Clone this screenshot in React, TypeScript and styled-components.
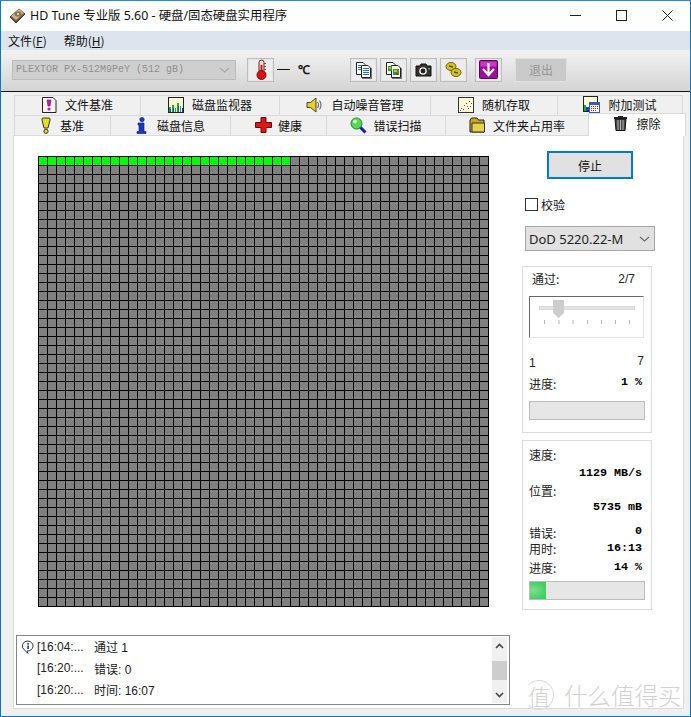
import React from "react";
import styled, { createGlobalStyle } from "styled-components";

const Global = createGlobalStyle`
  html, body { margin: 0; padding: 0; background: #f0f0f0; }
  * { box-sizing: border-box; }
  body { font-family: "Liberation Sans", "Noto Sans CJK SC", sans-serif; font-size: 12px; color: #111; }
`;

const Win = styled.div`
  width: 691px; height: 717px; border: 1px solid #0078d7; border-top-color: #2b88d8;
  background: #f0f0f0; display: flex; flex-direction: column; overflow: hidden; position: relative;
`;
const TitleBar = styled.div`
  height: 30px; background: #fff; display: flex; align-items: center; padding-left: 8px; flex: none;
`;
const TitleText = styled.div`
  margin: -2px 0 0 4px; font: 12.4px "Noto Sans", "Noto Sans CJK SC", sans-serif; color: #111; white-space: nowrap;
`;
const WinControls = styled.div`
  margin-left: auto; display: flex; height: 100%; align-items: center; padding-bottom: 2px;
`;
const WinBtn = styled.div`
  width: 46px; height: 100%; display: flex; align-items: center; justify-content: center; color: #222;
`;
const MenuBar = styled.div`
  height: 19px; background: #dde4ed; display: flex; gap: 17px; padding-left: 7px; align-items: center; flex: none;
`;
const MenuItem = styled.span`
  font: 12px "Noto Sans CJK SC", sans-serif; color: #111; u { text-underline-offset: 1px; }
`;
const Toolbar = styled.div`
  height: 41px; flex: none; background: linear-gradient(#f2f2f2, #d4d4d4);
  display: flex; align-items: center; padding-left: 11px;
`;
const BlackLine = styled.div` height: 1px; background: #111; flex: none; `;
const DriveCombo = styled.div`
  width: 224px; height: 20px; margin-top: -2px; background: #cfcfcf; border: 1px solid #bcbcbc;
  display: flex; align-items: center; justify-content: space-between; padding: 0 5px 0 3px;
  font: 10px "Liberation Mono", monospace; color: #8f8f8f; white-space: nowrap;
`;
const ToolBtn = styled.div<{ $ml?: number }>`
  width: 27px; height: 24px; margin-top: -2px; margin-left: ${p => p.$ml ?? 3}px;
  border: 1px solid #bdbdbd; background: #ececec; box-shadow: inset 0 0 0 1px #e6e6e6;
  display: flex; align-items: center; justify-content: center; flex: none;
`;
const Dash = styled.div` width: 13px; height: 1px; background: #111; margin: -2px 0 0 3px; `;
const Deg = styled.div` font: bold 12px "Liberation Serif", serif; margin: -3px 0 0 8px; color: #111; width: 17px; `;
const ExitBtn = styled.div`
  width: 52px; height: 24px; margin: -2px 0 0 13px; background: #cacaca; border: 1px solid #e0e0e0;
  color: #969696; font: 12px "Noto Sans CJK SC", sans-serif; display: flex; align-items: center; justify-content: center;
`;
const Tabs = styled.div` padding: 3px 0 0 13px; flex: none; `;
const TabRow = styled.div<{ $cols: string }>`
  display: grid; grid-template-columns: ${p => p.$cols}; height: 20px;
`;
const Tab = styled.div<{ $active?: boolean; $gap?: number }>`
  display: flex; align-items: center; justify-content: center; gap: ${p => p.$gap ?? 8}px;
  border: 1px solid #d9d9d9; border-bottom: none; margin-right: -1px; padding-bottom: 2px;
  background: ${p => (p.$active ? "#fff" : "#f0f0f0")}; font: 12px "Noto Sans CJK SC", sans-serif; color: #111; white-space: nowrap;
  ${p => p.$active && `position: relative; z-index: 2; margin-top: -2px; height: 23px; padding-bottom: 4px; margin-right: -2px;`}
`;
const Panel = styled.div`
  margin: 0 6px 0 12px; height: 574px; border: 1px solid #d9d9d9; background: #fff;
  display: flex; flex: none;
`;
const LeftCol = styled.div` width: 498px; flex: none; padding-top: 20px; `;
const Disk = styled.div`
  margin-left: 24px; width: 451px; height: 451px; display: grid; padding: 1px;
  grid-template-columns: repeat(50, 8px); grid-auto-rows: 8px; gap: 1px; background: #000;
`;
const Cell = styled.div<{ $done: boolean }>` background: ${p => (p.$done ? "#00ff00" : "#808080")}; `;
const LogBox = styled.div`
  margin: 28px 0 0 2px; width: 494px; height: 70px; border: 1px solid #82858c; display: flex; padding: 1px 2px 1px 0;
`;
const LogRows = styled.div` flex: 1; margin-top: -1px; `;
const LogRow = styled.div`
  height: 21.5px; display: grid; grid-template-columns: 16px 57px 1fr; align-items: center;
  font: 12px "Liberation Sans", "Noto Sans CJK SC", sans-serif; color: #222; padding-left: 4px;
`;
const Scroll = styled.div`
  width: 15px; background: #f0f0f0; display: flex; flex-direction: column; justify-content: space-between; align-items: center;
`;
const ScrollArrow = styled.div` height: 17px; display: flex; align-items: center; justify-content: center; `;
const Thumb = styled.div` width: 15px; height: 19px; background: #cdcdcd; `;
const Side = styled.div` margin-left: 10px; width: 133px; padding-top: 15px; display: flex; flex-direction: column; align-items: flex-start; `;
const StopBtn = styled.div`
  margin-left: 25px; width: 86px; height: 28px; border: 2px solid #0078d7; background: #e1e1e1;
  display: flex; align-items: center; justify-content: center; font: 12px "Noto Sans CJK SC", sans-serif;
`;
const CheckLine = styled.div` margin: 19px 0 0 3px; display: flex; align-items: center; gap: 3px; height: 13px; font: 12px "Noto Sans CJK SC", sans-serif; `;
const CheckBoxMark = styled.div` width: 13px; height: 13px; border: 1px solid #333; background: #fff; `;
const Select = styled.div`
  margin: 15px 0 0 3px; width: 130px; height: 25px; background: #e1e1e1; border: 1px solid #a6a6a6;
  display: flex; align-items: center; justify-content: space-between; padding: 0 4px 0 3px;
  font: 13px "Noto Sans", sans-serif; color: #222; white-space: nowrap;
`;
const Group = styled.div<{ $h: number; $mt: number; $pt: number }>`
  width: 130px; height: ${p => p.$h}px; margin-top: ${p => p.$mt}px; padding: ${p => p.$pt}px 6px 0;
  border: 1px solid #dcdcdc; background: #fff;
`;
const Line = styled.div<{ $mt?: number; $pl?: number; $pr?: number }>`
  height: 16px; margin-top: ${p => p.$mt ?? 0}px; padding-left: ${p => p.$pl ?? 0}px; padding-right: ${p => p.$pr ?? 1}px;
  display: flex; justify-content: space-between; align-items: center;
  font: 12px "Noto Sans CJK SC", sans-serif; color: #222;
`;
const Label = styled.span` position: relative; top: -1px; `;
const Mono = styled.b<{ $dy?: number }>`
  margin: 0 2px 0 auto; font: bold 11.7px "Liberation Mono", monospace; color: #000; white-space: pre;
  position: relative; top: ${p => (p.$dy ?? 0) + 1}px;
`;
const Plain = styled.span<{ $dy?: number }>`
  font: 12px "Liberation Sans", sans-serif; color: #222; position: relative; top: ${p => p.$dy ?? 0}px;
`;
const Slider = styled.div`
  margin-top: 9px; width: 115px; height: 42px; border: 1px solid #e3e3e3; border-top: 1px solid #696969; border-left: 1px solid #696969;
  display: flex; align-items: flex-start; justify-content: center;
`;
const Bar = styled.div<{ $mt: number }>`
  margin-top: ${p => p.$mt}px; width: 116px; height: 19px; background: #e6e6e6; border: 1px solid #bcbcbc;
`;
const Fill = styled.div`
  height: 100%; background: radial-gradient(ellipse at 20% 50%, #7fe08f, #3fcf5f 75%);
`;
const Watermark = styled.div`
  position: absolute; left: 523px; top: 677px; display: flex; align-items: center; gap: 10px; color: #d2d2d2;
  font: 300 23.5px "Noto Sans CJK SC", sans-serif; white-space: nowrap; pointer-events: none;
`;
const WmCircle = styled.div`
  width: 30px; height: 30px; border-radius: 50%; border: 1px solid #dadada; border-left-color: transparent;
  display: flex; align-items: center; justify-content: center; font-size: 22px; color: #d2d2d2;
`;

/* ---- icons ---- */
const HddLogo = () => (
  <svg width="17" height="16" viewBox="0 0 17 16">
    <path d="M1 9 L10 1 L16 6 L7 15 Z" fill="#6e5a3c" stroke="#333" />
    <path d="M2 8 L10 1 L15 5 L7 12 Z" fill="#c9b48a" />
    <ellipse cx="9" cy="6" rx="3.6" ry="2.6" fill="#8d7448" />
    <circle cx="9" cy="6" r="1" fill="#eee" />
  </svg>
);
const Thermo = () => (
  <svg width="12" height="21" viewBox="0 0 12 21">
    <rect x="4" y="1" width="5" height="13" rx="2.5" fill="#f3d8c8" stroke="#5a2a2a" />
    <rect x="5.5" y="6" width="2" height="9" fill="#e01010" />
    <circle cx="6.5" cy="16" r="4.5" fill="#e01010" stroke="#7a1010" />
    <rect x="9" y="4" width="2" height="1" fill="#555" /><rect x="9" y="7" width="2" height="1" fill="#555" /><rect x="9" y="10" width="2" height="1" fill="#555" />
  </svg>
);
const Docs = ({ color }: { color: "blue" | "pic" }) => (
  <svg width="17" height="18" viewBox="0 0 17 18">
    <path d="M1.5 1.5 H8 L10 3.5 V13.5 H1.5 Z" fill="#fff" stroke="#222" />
    <path d="M6.5 4.5 H13 L15.5 7 V16.5 H6.5 Z" fill="#fff" stroke="#222" />
    <rect x="16" y="7" width="1" height="10" fill="#777" /><rect x="7" y="17" width="10" height="1" fill="#777" />
    {color === "blue" ? (
      <g fill="#1a6fd0">
        <rect x="3" y="4" width="3" height="1" /><rect x="3" y="6" width="3" height="1" /><rect x="3" y="8" width="3" height="1" />
        <rect x="8" y="7" width="6" height="1" /><rect x="8" y="9" width="6" height="1" /><rect x="8" y="11" width="6" height="1" /><rect x="8" y="13" width="6" height="1" />
      </g>
    ) : (
      <g>
        <rect x="3" y="5" width="4" height="5" fill="#2e9a3a" /><rect x="4" y="6" width="2" height="2" fill="#e0c020" />
        <rect x="8" y="8" width="6" height="6" fill="#2e9a3a" /><rect x="9" y="9" width="3" height="2" fill="#e0c020" /><rect x="11" y="12" width="2" height="2" fill="#d02020" />
      </g>
    )}
  </svg>
);
const Camera = () => (
  <svg width="17" height="14" viewBox="0 0 17 14">
    <path d="M1 3 H5 L6 1 H11 L12 3 H16 V13 H1 Z" fill="#333" stroke="#111" />
    <circle cx="8" cy="8" r="3.8" fill="#eee" /><circle cx="8" cy="8" r="2.4" fill="#222" />
    <rect x="13" y="5" width="2" height="1.5" fill="#19c040" />
  </svg>
);
const Coins = () => (
  <svg width="17" height="17" viewBox="0 0 17 17">
    <ellipse cx="6" cy="5.5" rx="5" ry="4" fill="#d9c31a" stroke="#6b5f10" />
    <ellipse cx="11" cy="11.5" rx="5" ry="4" fill="#d9c31a" stroke="#6b5f10" />
    <path d="M4 5 L8 6 M9 11 L13 12" stroke="#5a5010" strokeWidth="1.4" />
  </svg>
);
const PurpleDown = () => (
  <svg width="19" height="19" viewBox="0 0 19 19">
    <rect x="0.5" y="0.5" width="18" height="18" rx="1" fill="#a00c9c" stroke="#4e0a4c" />
    <rect x="1.5" y="1.5" width="16" height="5" fill="#cf35c8" />
    <path d="M9.5 3 V14 M4 9 L9.5 15 L15 9" fill="none" stroke="#fff" strokeWidth="2.2" />
  </svg>
);
const PageExclaim = () => (
  <svg width="15" height="16" viewBox="0 0 15 16">
    <path d="M0.5 0.5 H11 L14 3.5 V15.5 H0.5 Z" fill="#fbf8e8" stroke="#222" />
    <path d="M5 3 H9 L8 9 H6 Z" fill="#c617c6" stroke="#6b0d6b" strokeWidth=".6" />
    <circle cx="7" cy="12" r="1.6" fill="#c617c6" />
  </svg>
);
const ChartIcon = () => (
  <svg width="16" height="16" viewBox="0 0 16 16">
    <rect x="0.5" y="0.5" width="15" height="15" fill="#fffbd8" stroke="#222" />
    <path d="M1 15 V10 H3 V15 Z M4 15 V8 H6 V15 Z M7 15 V11 H8 V15 Z M9 15 V6 H11 V15 Z M12 15 V9 H13 V15 Z" fill="#11b52a" />
    <path d="M2 15 V12 H3 V15 Z M5 15 V11 H6 V15 Z M10 15 V9 H11 V15 Z M14 15 V11 H15 V15 Z" fill="#1a3fd6" />
  </svg>
);
const Speaker = () => (
  <svg width="17" height="16" viewBox="0 0 17 16">
    <path d="M1 5.5 H4.5 L10 1 V15 L4.5 10.5 H1 Z" fill="#e3d21e" stroke="#444" />
    <path d="M11.5 5 Q13.5 8 11.5 11 M13.5 3.5 Q16.5 8 13.5 12.5" fill="none" stroke="#666" strokeWidth="1.1" />
  </svg>
);
const Scatter = () => (
  <svg width="16" height="16" viewBox="0 0 16 16">
    <rect x="0.5" y="0.5" width="15" height="15" fill="#fffbd8" stroke="#333" />
    <g fill="#d01818"><rect x="3" y="11" width="1" height="1" /><rect x="6" y="8" width="1" height="1" /><rect x="9" y="9" width="1" height="1" /><rect x="11" y="4" width="1" height="1" /><rect x="13" y="6" width="1" height="1" /></g>
    <g fill="#1a3fd6"><rect x="2" y="13" width="1" height="1" /><rect x="5" y="12" width="1" height="1" /><rect x="8" y="6" width="1" height="1" /><rect x="10" y="11" width="1" height="1" /><rect x="12" y="9" width="1" height="1" /></g>
  </svg>
);
const CalChart = () => (
  <svg width="17" height="17" viewBox="0 0 17 17">
    <rect x="0.5" y="0.5" width="14" height="15" fill="#fffbd8" stroke="#222" />
    <path d="M1 15 V9 H3 V15 Z" fill="#11b52a" /><path d="M3 15 V11 H6 V15 Z" fill="#1a3fd6" />
    <rect x="6.5" y="6.5" width="10" height="10" fill="#fff" stroke="#3a5ab8" />
    <rect x="7" y="7" width="9" height="2" fill="#3a5ab8" />
    <g fill="#d01818"><rect x="8" y="10" width="1" height="1" /><rect x="10" y="10" width="1" height="1" /><rect x="12" y="10" width="1" height="1" /><rect x="14" y="10" width="1" height="1" /><rect x="8" y="12" width="1" height="1" /><rect x="10" y="12" width="1" height="1" /><rect x="12" y="12" width="1" height="1" /><rect x="14" y="12" width="1" height="1" /><rect x="8" y="14" width="1" height="1" /><rect x="10" y="14" width="1" height="1" /><rect x="12" y="14" width="1" height="1" /></g>
  </svg>
);
const YellowBang = () => (
  <svg width="10" height="17" viewBox="0 0 10 17">
    <path d="M2 1 H8 Q9.5 1 9 3 L7 11 H3 L1 3 Q0.5 1 2 1 Z" fill="#e5e01a" stroke="#333" />
    <circle cx="5" cy="14.3" r="2.1" fill="#e5e01a" stroke="#333" />
  </svg>
);
const InfoI = () => (
  <svg width="11" height="17" viewBox="0 0 11 17">
    <circle cx="6" cy="2.6" r="2.2" fill="#1838c8" stroke="#0b1a60" strokeWidth=".6" />
    <path d="M2 6 H8 V14.5 H10 V16.5 H1 V14.5 H3 V8 H2 Z" fill="#1838c8" stroke="#0b1a60" strokeWidth=".6" />
  </svg>
);
const RedCross = () => (
  <svg width="17" height="16" viewBox="0 0 17 16">
    <path d="M6 0.5 H11 V5.5 H16.5 V10.5 H11 V15.5 H6 V10.5 H0.5 V5.5 H6 Z" fill="#e01616" stroke="#5e0d0d" />
  </svg>
);
const Magnifier = () => (
  <svg width="17" height="17" viewBox="0 0 17 17">
    <path d="M10 10 L15.5 15.5" stroke="#1a1ab0" strokeWidth="3" />
    <circle cx="6.5" cy="6.5" r="5.5" fill="#55d855" stroke="#2a7a2a" />
    <circle cx="5" cy="4.5" r="2" fill="#c4f2c4" />
  </svg>
);
const Folder = () => (
  <svg width="17" height="16" viewBox="0 0 17 16">
    <path d="M1 3 L2.5 1 H8 L9.5 3 H15 V15 H1 Z" fill="#c9a820" stroke="#222" />
    <path d="M3 6 H15.5 V15 H3 Z" fill="#e6d24a" stroke="#333" />
  </svg>
);
const Trash = () => (
  <svg width="15" height="16" viewBox="0 0 15 16">
    <path d="M5 1 H10 V2 H14 V4 H1 V2 H5 Z" fill="#222" />
    <path d="M2 4 H13 L12 15.5 H3 Z" fill="#444" stroke="#111" />
    <path d="M5 5 V15 M7.5 5 V15 M10 5 V15" stroke="#bbb" strokeWidth="1" />
  </svg>
);
const InfoBubble = () => (
  <svg width="14" height="14" viewBox="0 0 14 14">
    <path d="M7 1 A5.5 5 0 1 1 6 11 L7 13.5 L3.5 10 A5.5 5 0 0 1 7 1 Z" fill="#fff" stroke="#333" />
    <rect x="6.3" y="3" width="1.6" height="1.6" fill="#1838c8" /><rect x="6.3" y="5.5" width="1.6" height="3.6" fill="#1838c8" />
  </svg>
);
const Chevron = ({ color = "#666" }: { color?: string }) => (
  <svg width="11" height="6" viewBox="0 0 11 6"><path d="M1 1 L5.5 5 L10 1" fill="none" stroke={color} strokeWidth="1.1" /></svg>
);
const SliderArt = () => (
  <svg width="110" height="32" viewBox="0 0 110 32">
    <rect x="7.5" y="9.5" width="95" height="3" fill="#e4e4e4" stroke="#d8d8d8" />
    <path d="M21 3 H32 V16 L26.5 21 L21 16 Z" fill="#cdcdcd" />
    {[12, 26.5, 40.5, 55, 69, 83, 97].map(x => <rect key={x} x={x} y="23" width="1" height="4" fill="#b5b5b5" />)}
  </svg>
);

const row1: [React.ReactNode, string][] = [
  [<PageExclaim />, "文件基准"], [<ChartIcon />, "磁盘监视器"], [<Speaker />, "自动噪音管理"], [<Scatter />, "随机存取"], [<CalChart />, "附加测试"],
];
const row2: [React.ReactNode, string, number][] = [
  [<YellowBang />, "基准", 9], [<InfoI />, "磁盘信息", 10], [<RedCross />, "健康", 6], [<Magnifier />, "错误扫描", 6], [<Folder />, "文件夹占用率", 7],
];
const logs = [["[16:04:...", "通过 1"], ["[16:20:...", "错误: 0"], ["[16:20:...", "时间: 16:07"]];

export default function App() {
  return (
    <>
      <Global />
      <Win>
        <TitleBar>
          <HddLogo />
          <TitleText>HD Tune 专业版 5.60 - 硬盘/固态硬盘实用程序</TitleText>
          <WinControls>
            <WinBtn><svg width="11" height="1"><rect width="11" height="1" fill="#222" /></svg></WinBtn>
            <WinBtn><svg width="11" height="11"><rect x=".5" y=".5" width="10" height="10" fill="none" stroke="#222" /></svg></WinBtn>
            <WinBtn><svg width="11" height="11"><path d="M.5 .5 L10.5 10.5 M10.5 .5 L.5 10.5" stroke="#222" /></svg></WinBtn>
          </WinControls>
        </TitleBar>
        <MenuBar>
          <MenuItem>文件(<u>F</u>)</MenuItem>
          <MenuItem>帮助(<u>H</u>)</MenuItem>
        </MenuBar>
        <Toolbar>
          <DriveCombo>PLEXTOR PX-512M9PeY (512 gB)<Chevron color="#aaa" /></DriveCombo>
          <ToolBtn $ml={11}><Thermo /></ToolBtn>
          <Dash />
          <Deg>℃</Deg>
          <ToolBtn $ml={35}><Docs color="blue" /></ToolBtn>
          <ToolBtn><Docs color="pic" /></ToolBtn>
          <ToolBtn><Camera /></ToolBtn>
          <ToolBtn><Coins /></ToolBtn>
          <ToolBtn $ml={8}><PurpleDown /></ToolBtn>
          <ExitBtn>退出</ExitBtn>
        </Toolbar>
        <BlackLine />
        <Tabs>
          <TabRow $cols="126px 139px 151px 127px 125px">
            {row1.map(([ic, t]) => <Tab key={t}>{ic}{t}</Tab>)}
          </TabRow>
          <TabRow $cols="96px 120px 96px 119px 143px 96px">
            {row2.map(([ic, t, g]) => <Tab key={t} $gap={g}>{ic}{t}</Tab>)}
            <Tab $active><Trash />擦除</Tab>
          </TabRow>
        </Tabs>
        <Panel>
          <LeftCol>
            <Disk>
              {Array.from({ length: 2500 }, (_, i) => <Cell key={i} $done={i < 28} />)}
            </Disk>
            <LogBox>
              <LogRows>
                {logs.map(([a, b], i) => (
                  <LogRow key={i}>
                    {i === 0 ? <InfoBubble /> : <span />}
                    <span>{a}</span>
                    <span>{b}</span>
                  </LogRow>
                ))}
              </LogRows>
              <Scroll>
                <ScrollArrow><svg width="9" height="6" viewBox="0 0 9 6"><path d="M1 5 L4.5 1.5 L8 5" fill="none" stroke="#444" strokeWidth="1.6" /></svg></ScrollArrow>
                <Thumb />
                <ScrollArrow><svg width="9" height="6" viewBox="0 0 9 6"><path d="M1 1 L4.5 4.5 L8 1" fill="none" stroke="#444" strokeWidth="1.6" /></svg></ScrollArrow>
              </Scroll>
            </LogBox>
          </LeftCol>
          <Side>
            <StopBtn>停止</StopBtn>
            <CheckLine><CheckBoxMark />校验</CheckLine>
            <Select>DoD 5220.22-M<Chevron /></Select>
            <Group $h={167} $mt={15} $pt={4}>
              <Line $pl={3} $pr={10}><Label>通过:</Label><Plain>2/7</Plain></Line>
              <Slider><SliderArt /></Slider>
              <Line $mt={15}><Plain $dy={2}>1</Plain><Plain>7</Plain></Line>
              <Line $mt={7}><Label>进度:</Label><Mono $dy={-3}>1 %</Mono></Line>
              <Bar $mt={9} />
            </Group>
            <Group $h={170} $mt={7} $pt={6}>
              <Line><Label>速度:</Label></Line>
              <Line $mt={1}><Mono>1129 MB/s</Mono></Line>
              <Line $mt={3}><Label>位置:</Label></Line>
              <Line $mt={-1}><Mono>5735 mB</Mono></Line>
              <Line $mt={11}><Label>错误:</Label><Mono $dy={-3}>0</Mono></Line>
              <Line><Label>用时:</Label><Mono $dy={-2}>16:13</Mono></Line>
              <Line $mt={3}><Label>进度:</Label><Mono $dy={-2}>14 %</Mono></Line>
              <Bar $mt={5}><Fill style={{ width: "14%" }} /></Bar>
            </Group>
          </Side>
        </Panel>
        <Watermark><WmCircle>值</WmCircle><span>什么值得买</span></Watermark>
      </Win>
    </>
  );
}
